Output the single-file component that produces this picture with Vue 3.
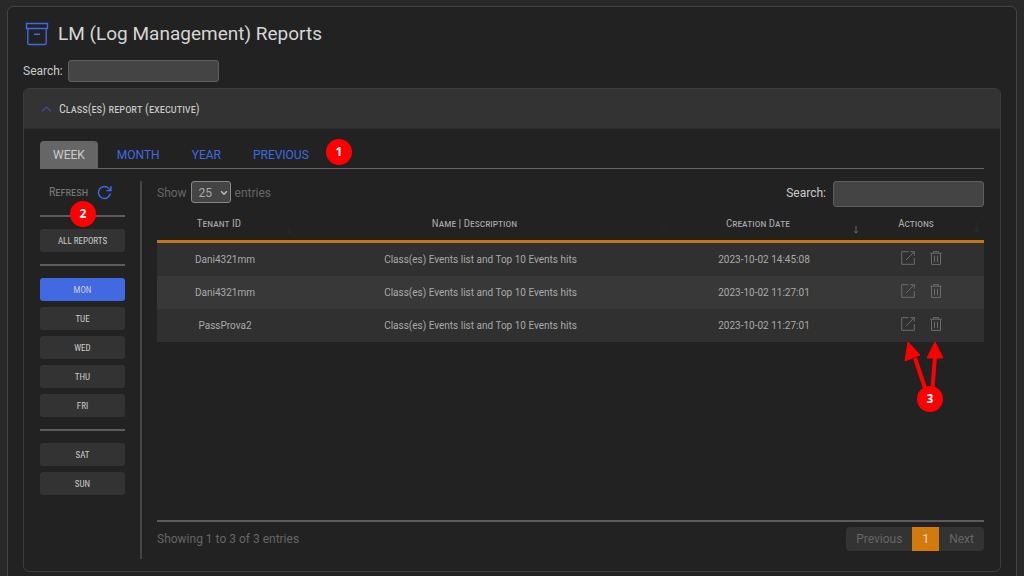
<script setup>
import { ref } from 'vue'

const tabs = ['WEEK', 'MONTH', 'YEAR', 'PREVIOUS']
const activeTab = ref('WEEK')
const weekdays = ['MON', 'TUE', 'WED', 'THU', 'FRI']
const weekend = ['SAT', 'SUN']
const activeDay = ref('MON')
const pageSearch = ref('')
const tableSearch = ref('')
const pageSize = ref('25')
const columns = [
  { key: 'tenant', label: 'Tenant ID' },
  { key: 'name', label: 'Name | Description' },
  { key: 'date', label: 'Creation Date', sorted: true },
  { key: 'actions', label: 'Actions' },
]
const rows = [
  { tenant: 'Dani4321mm', name: 'Class(es) Events list and Top 10 Events hits', date: '2023-10-02 14:45:08' },
  { tenant: 'Dani4321mm', name: 'Class(es) Events list and Top 10 Events hits', date: '2023-10-02 11:27:01' },
  { tenant: 'PassProva2', name: 'Class(es) Events list and Top 10 Events hits', date: '2023-10-02 11:27:01' },
]
</script>

<template>
  <main class="page">
    <section class="card">
      <header class="title">
        <svg class="archive" viewBox="0 0 24 24" aria-hidden="true">
          <path d="M1.500 1.500h21v5h-21zM2.800 6.500v14.200q0 1.800 1.800 1.800h14.800q1.800 0 1.800-1.800V6.500M9 12.300h6" />
        </svg>
        <h1>LM (Log Management) Reports</h1>
      </header>
      <div class="field">
        <label for="page-search">Search:</label>
        <input id="page-search" v-model="pageSearch" type="text" />
      </div>

      <section class="panel">
        <button class="panel-head" type="button">
          <svg viewBox="0 0 12 8" aria-hidden="true"><path d="M1 6.500 6 2l5 4.500" /></svg>
          <span>Class(es) report (executive)</span>
        </button>

        <div class="panel-body">
          <nav class="tabs">
            <button
              v-for="tab in tabs"
              :key="tab"
              type="button"
              :class="{ active: tab === activeTab }"
              @click="activeTab = tab"
            >{{ tab }}</button>
            <span class="badge badge-tabs">1</span>
          </nav>

          <div class="content">
            <aside class="side">
              <button class="refresh" type="button">
                <span>Refresh</span>
                <svg viewBox="0 0 16 16" aria-hidden="true">
                  <path d="M14.300 9A6.400 6.400 0 1 1 12.600 3.600L14.800 6M14.900 1v5h-5" />
                </svg>
              </button>
              <hr />
              <button class="day" type="button">ALL REPORTS</button>
              <hr />
              <div class="days">
                <button
                  v-for="day in weekdays"
                  :key="day"
                  class="day"
                  :class="{ active: day === activeDay }"
                  type="button"
                  @click="activeDay = day"
                >{{ day }}</button>
              </div>
              <hr />
              <div class="days">
                <button
                  v-for="day in weekend"
                  :key="day"
                  class="day"
                  :class="{ active: day === activeDay }"
                  type="button"
                  @click="activeDay = day"
                >{{ day }}</button>
              </div>
              <span class="badge badge-side">2</span>
            </aside>

            <div class="listing">
              <div class="tools">
                <label class="length">Show
                  <span class="select">
                    <select v-model="pageSize">
                      <option>10</option>
                      <option>25</option>
                      <option>50</option>
                    </select>
                    <svg viewBox="0 0 8 6" aria-hidden="true"><path d="m1 1.200 3 3 3-3" /></svg>
                  </span>
                  entries</label>
                <div class="field filter">
                  <label for="table-search">Search:</label>
                  <input id="table-search" v-model="tableSearch" type="text" />
                </div>
              </div>

              <div class="table-wrap">
                <table>
                  <thead>
                    <tr>
                      <th v-for="col in columns" :key="col.key" :class="col.key" scope="col">
                        {{ col.label }}
                        <svg class="sort" :class="{ sorted: col.sorted }" viewBox="0 0 8 10" aria-hidden="true">
                          <path d="M4 1v7M2 6.200l2 2 2-2" />
                        </svg>
                      </th>
                    </tr>
                  </thead>
                  <tbody>
                    <tr v-for="(row, i) in rows" :key="i">
                      <td>{{ row.tenant }}</td>
                      <td>{{ row.name }}</td>
                      <td>{{ row.date }}</td>
                      <td>
                        <div class="actions">
                          <button type="button" aria-label="Open report">
                            <svg viewBox="0 0 14 14" aria-hidden="true">
                              <path d="M7.500.700H.700v12.600h12.600V7M9.300.700h4v4M13.300.700 5 9" />
                            </svg>
                          </button>
                          <button type="button" aria-label="Delete report">
                            <svg viewBox="0 0 14 14" aria-hidden="true">
                              <path d="M1.200 2.200h11.600M4.500 2V.600h5V2M2.500 2.400v11h9v-11M5.500 4.600v6.600M8.500 4.600v6.600" />
                            </svg>
                          </button>
                        </div>
                      </td>
                    </tr>
                  </tbody>
                </table>
                <div class="pointer">
                  <svg viewBox="0 0 44 60" aria-hidden="true">
                    <path class="shaft" d="M23 53 11 17M28 53l3-38" />
                    <path class="tip" d="M4 1 1 20l15-6zM31 1l-8 16h16z" />
                  </svg>
                  <span class="badge">3</span>
                </div>
              </div>

              <footer class="foot">
                <span>Showing 1 to 3 of 3 entries</span>
                <nav class="pager">
                  <button type="button">Previous</button>
                  <button type="button" class="current">1</button>
                  <button type="button">Next</button>
                </nav>
              </footer>
            </div>
          </div>
        </div>
      </section>
    </section>
  </main>
</template>

<style>
body {
  background: #292929;
  overflow: hidden;
}
</style>

<style scoped>
.page,
.page * {
  box-sizing: border-box;
}
.page {
  padding: 6px 7px;
  font-family: Roboto, "Liberation Sans", sans-serif;
  font-size: 12px;
  line-height: 16px;
  color: #ccc;
}
button,
input,
select {
  font: inherit;
  color: inherit;
}
button {
  border: 0;
  padding: 0;
  background: none;
  cursor: pointer;
}
svg {
  display: block;
  fill: none;
  stroke: currentColor;
  overflow: visible;
}
.card {
  background: #222;
  border: 1px solid #444;
  border-radius: 6px;
  padding: 13px 15px 16px;
}
.title {
  display: flex;
  align-items: center;
  gap: 9px;
  height: 28px;
  padding-left: 2px;
}
.title h1 {
  margin: 0;
  font-size: 19px;
  font-weight: 400;
  line-height: 28px;
  color: #d6d6d6;
}
.archive {
  width: 24px;
  height: 24px;
  color: #4169e1;
  stroke-width: 1.4;
}
.field {
  display: flex;
  align-items: center;
  gap: 5px;
}
.card > .field {
  margin: 12px 0 6px;
}
.field input {
  width: 151px;
  height: 22px;
  padding: 2px 6px;
  background: #444;
  border: 1px solid #5e5e5e;
  border-radius: 3px;
}
.panel {
  border: 1px solid #3c3c3c;
  border-radius: 6px;
}
.panel-head {
  display: flex;
  align-items: center;
  gap: 7px;
  width: 100%;
  height: 40px;
  padding: 0 17px;
  background: #333;
  border-bottom: 1px solid #2b2b2b;
  border-radius: 5px 5px 0 0;
  font-family: "Roboto Condensed", Roboto, sans-serif;
  font-variant: small-caps;
}
.panel-head svg {
  width: 11px;
  height: 8px;
  color: #4169e1;
}
.panel-body {
  padding: 12px 16px;
}
.tabs {
  position: relative;
  display: flex;
  gap: 6px;
  border-bottom: 1px solid #666;
}
.tabs button {
  height: 27px;
  padding: 0 13px;
  color: #4169e1;
  border-radius: 4px 4px 0 0;
}
.tabs .active {
  background: #666;
  color: #ccc;
}
.badge {
  position: absolute;
  width: 26px;
  height: 26px;
  border-radius: 50%;
  background: #f00;
  color: #fff;
  font: 700 12px/26px "Open Sans", sans-serif;
  text-align: center;
}
.badge-tabs {
  left: 286px;
  top: -2px;
}
.badge-side {
  left: 30px;
  top: 20px;
}
.content {
  display: flex;
  gap: 15px;
  margin-top: 12px;
  min-height: 378px;
}
.side {
  position: relative;
  flex: 0 0 102px;
  padding-right: 15px;
  border-right: 2px solid #444;
}
.refresh {
  display: flex;
  align-items: center;
  gap: 9px;
  height: 22px;
  margin-left: 9px;
  color: #777;
  font-family: "Roboto Condensed", Roboto, sans-serif;
  font-variant: small-caps;
}
.refresh svg {
  width: 15px;
  height: 15px;
  color: #4169e1;
  stroke-width: 1.5;
}
hr {
  height: 2px;
  margin: 12px 0;
  border: 0;
  background: #5c5c5c;
}
.day {
  display: block;
  width: 100%;
  height: 23px;
  border-radius: 3px;
  background: #333;
  font-family: "Roboto Condensed", Roboto, sans-serif;
  font-size: 9px;
  color: #ccc;
}
.day.active {
  background: #4169e1;
}
.days {
  display: grid;
  gap: 6px;
}
.listing {
  flex: 1;
  display: flex;
  flex-direction: column;
}
.tools {
  display: flex;
  justify-content: space-between;
}
.length {
  height: 22px;
  line-height: 22px;
  color: #666;
}
.select {
  position: relative;
  display: inline-block;
  margin: 0 1px;
}
.select select {
  appearance: none;
  width: 40px;
  height: 22px;
  padding: 0 7px;
  background: #444;
  border: 1px solid #888;
  border-radius: 3px;
  color: #aaa;
}
.select svg {
  position: absolute;
  right: 3px;
  top: 9px;
  width: 8px;
  height: 6px;
  color: #bbb;
  stroke-width: 1.5;
  pointer-events: none;
}
.filter {
  gap: 7px;
  align-items: flex-start;
  line-height: 24px;
}
.filter input {
  height: 26px;
}
.table-wrap {
  position: relative;
  flex: 1;
  border-bottom: 2px solid #5c5c5c;
}
table {
  width: 100%;
  border-spacing: 0;
  table-layout: fixed;
  text-align: center;
}
th {
  position: relative;
  height: 36px;
  padding: 0 12px 0 0;
  border-bottom: 3px solid #c87415;
  font-family: "Roboto Condensed", Roboto, sans-serif;
  font-size: 11px;
  font-weight: 400;
  font-variant: small-caps;
  color: #aaa;
}
.tenant {
  width: 136px;
}
.date {
  width: 192px;
}
.actions {
  width: 124px;
}
.sort {
  position: absolute;
  right: 0;
  bottom: 5px;
  width: 8px;
  height: 10px;
  color: #292929;
}
.sorted {
  color: #666;
}
td {
  height: 33px;
  padding: 0;
  font-size: 10px;
  color: #aaa;
}
tbody tr {
  background: #303030;
}
tbody tr:nth-child(even) {
  background: #383838;
}
td .actions {
  display: flex;
  justify-content: center;
  gap: 14px;
  padding-bottom: 4px;
  color: #6c6c6c;
}
.actions svg {
  width: 14px;
  height: 14px;
}
.pointer {
  position: absolute;
  right: 40px;
  top: 134px;
  width: 40px;
  height: 70px;
}
.pointer svg {
  width: 44px;
  height: 60px;
}
.pointer .badge {
  left: 13px;
  top: 45px;
}
.shaft {
  stroke: #f00;
  stroke-width: 4;
}
.tip {
  fill: #f00;
  stroke: #f00;
  stroke-linejoin: round;
}
.foot {
  display: flex;
  justify-content: space-between;
  padding: 5px 0 8px;
  line-height: 24px;
  color: #666;
}
.pager {
  display: flex;
  background: #333;
  border-radius: 4px;
}
.pager button {
  height: 24px;
  padding: 0 10px;
}
.pager .current {
  background: #d27a0c;
  color: #ddd;
}
</style>
